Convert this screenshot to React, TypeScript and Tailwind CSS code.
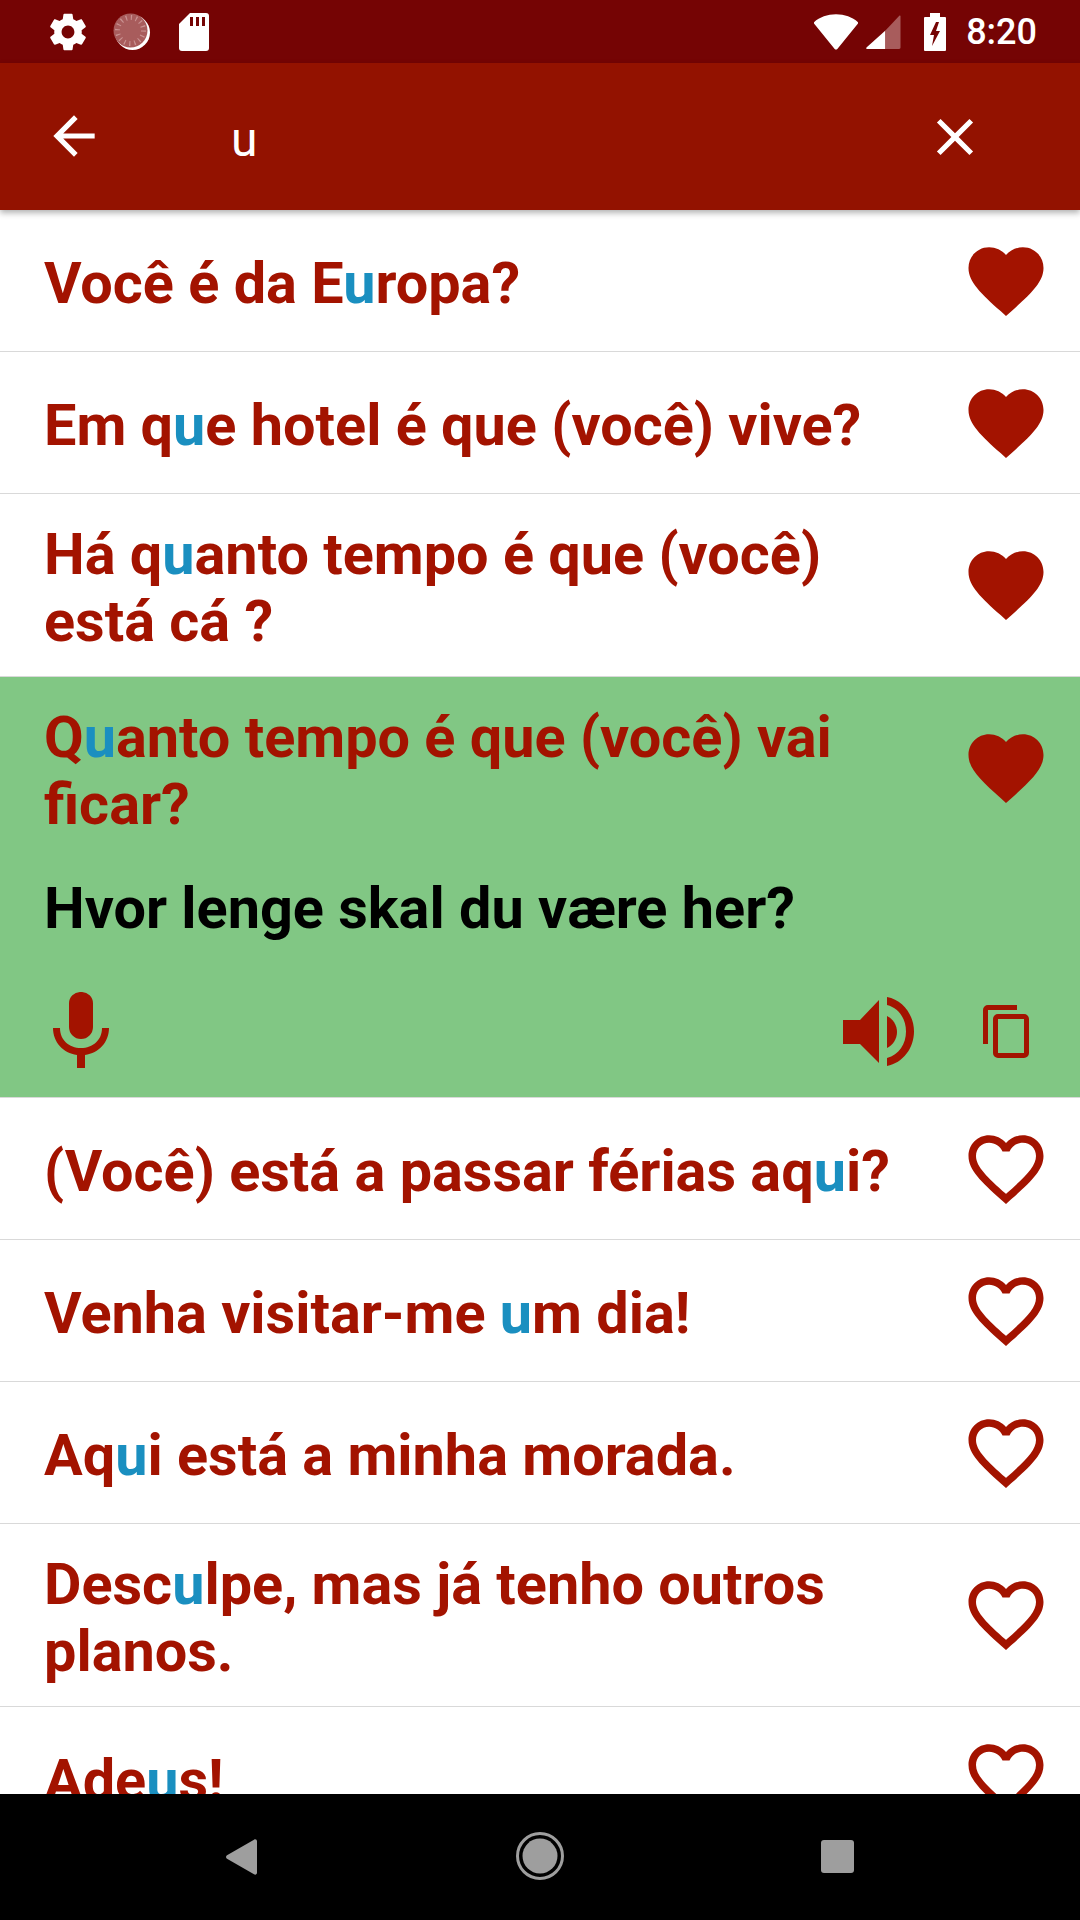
import React from "react";

const RED = "#a31300";

function Heart({ filled }: { filled: boolean }) {
  const d = "M12 21.35l-1.45-1.32C5.4 15.36 2 12.28 2 8.5 2 5.42 4.42 3 7.5 3c1.74 0 3.41.81 4.5 2.09C13.09 3.81 14.76 3 16.5 3 19.58 3 22 5.42 22 8.5c0 3.78-3.4 6.86-8.55 11.54L12 21.35z";
  const o = "M16.5 3c-1.74 0-3.41.81-4.5 2.09C10.91 3.81 9.24 3 7.5 3 4.42 3 2 5.42 2 8.5c0 3.78 3.4 6.86 8.55 11.54L12 21.35l1.45-1.32C18.6 15.36 22 12.28 22 8.5 22 5.42 19.58 3 16.5 3zm-4.4 15.55l-.1.1-.1-.1C7.14 14.24 4 11.39 4 8.5 4 6.5 5.5 5 7.5 5c1.54 0 3.04.99 3.57 2.36h1.87C13.46 5.99 14.96 5 16.5 5c2 0 3.5 1.5 3.5 3.5 0 2.89-3.14 5.74-7.9 10.05z";
  return (
    <svg viewBox="0 0 24 24" className="w-[90px] h-[90px] shrink-0" fill={RED}>
      <path d={filled ? d : o} />
    </svg>
  );
}

function Text({ parts }: { parts: string[] }) {
  return (
    <div className="flex-1 pt-[6px] pr-[30px] text-[57.6px] leading-[67px] font-bold text-[#a31300]">
      {parts.map((p, i) =>
        i % 2 === 1 ? (
          <span key={i} className="text-[#1a8fc0]">{p}</span>
        ) : (
          <span key={i}>{p}</span>
        )
      )}
    </div>
  );
}

function Row({ parts, filled }: { parts: string[]; filled: boolean }) {
  return (
    <div className="flex items-center min-h-[142px] pl-[44px] pr-[29px] py-[21px] border-b border-[#d9d9d9] bg-white">
      <Text parts={parts} />
      <Heart filled={filled} />
    </div>
  );
}

export default function App() {
  return (
    <div className="relative w-[1080px] h-[1920px] overflow-hidden bg-white flex flex-col font-['Roboto',sans-serif]">
      <div className="h-[63px] shrink-0 bg-[#750404] flex items-center pl-[46px] pr-[43px] text-white">
        <svg viewBox="0 0 24 24" className="w-[44px] h-[44px]" fill="#fff">
          <path d="M19.43 12.98c.04-.32.07-.64.07-.98s-.03-.66-.07-.98l2.11-1.65c.19-.15.24-.42.12-.64l-2-3.46c-.12-.22-.39-.3-.61-.22l-2.49 1c-.52-.4-1.08-.73-1.69-.98l-.38-2.65C14.46 2.18 14.25 2 14 2h-4c-.25 0-.46.18-.49.42l-.38 2.65c-.61.25-1.17.59-1.69.98l-2.49-1c-.23-.09-.49 0-.61.22l-2 3.46c-.13.22-.07.49.12.64l2.11 1.65c-.04.32-.07.65-.07.98s.03.66.07.98l-2.11 1.65c-.19.15-.24.42-.12.64l2 3.46c.12.22.39.3.61.22l2.49-1c.52.4 1.08.73 1.69.98l.38 2.65c.03.24.24.42.49.42h4c.25 0 .46-.18.49-.42l.38-2.65c.61-.25 1.17-.59 1.69-.98l2.49 1c.23.09.49 0 .61-.22l2-3.46c.12-.22.07-.49-.12-.64l-2.11-1.65zM12 15.5c-1.93 0-3.5-1.57-3.5-3.5s1.57-3.5 3.5-3.5 3.5 1.57 3.5 3.5-1.57 3.5-3.5 3.5z" />
        </svg>
        <svg viewBox="0 0 38 38" className="w-[38px] h-[38px] ml-[23px]">
          <circle cx="19.5" cy="19.5" r="17.5" fill="#fff" />
          <circle cx="17.5" cy="17.5" r="17" fill="#a85c5c" />
          <circle cx="17.5" cy="17.5" r="13" fill="none" stroke="#c99292" strokeWidth="5" strokeDasharray="1.2 3.9" />
        </svg>
        <svg viewBox="0 0 30 38" className="w-[30px] h-[38px] ml-[28px]" fill="#fff">
          <path d="M11 0h16a3 3 0 0 1 3 3v32a3 3 0 0 1-3 3H3a3 3 0 0 1-3-3V11z" />
          <path d="M11 4h3v9h-3zM17 4h3v9h-3zM23 4h3v9h-3z" fill="#750404" />
        </svg>
        <div className="flex-1" />
        <svg viewBox="0 0 46 37" className="w-[44px] h-[36px]" fill="#fff">
          <path d="M23 0C14 0 6 3 0 8.2c-.3.4-.3 1 0 1.3l21.6 26.7c.7.9 2 .9 2.8 0L46 9.500c.3-.3.3-.9 0-1.300C40 3 32 0 23 0z" />
        </svg>
        <svg viewBox="0 0 36 36" className="w-[35px] h-[35px] ml-[8px] mt-[2px]" fill="#fff">
          <path d="M20 16 L20 35 L1 35 C0 35 0 34 .5 33.500z" />
          <path d="M20 16 L34 1 C35 0 35.500 .5 35.500 1.500 V33 C35.500 34.500 35 35 34 35 H20z" fill="#a85c5c" />
        </svg>
        <svg viewBox="0 0 22 38" className="w-[22px] h-[38px] ml-[23px]" fill="#fff">
          <path fillRule="evenodd" d="M6 0h10v4h5a1 1 0 0 1 1 1v32a1 1 0 0 1-1 1H1a1 1 0 0 1-1-1V5a1 1 0 0 1 1-1h5zM12 9l-6 13h4l-2 11 8-15h-4l3-9z" />
        </svg>
        <span className="ml-[20px] text-[36px] font-medium leading-none">8:20</span>
      </div>

      <div className="relative z-10 h-[147px] shrink-0 bg-[#931200] flex items-center shadow-[0_3px_6px_rgba(0,0,0,0.3)] text-white">
        <svg viewBox="0 0 24 24" className="w-[62px] h-[62px] ml-[43px] mt-[-1px]" fill="#fff">
          <path d="M20 11H7.830l5.590-5.590L12 4l-8 8 8 8 1.410-1.410L7.830 13H20v-2z" />
        </svg>
        <span className="ml-[126px] pt-[6px] text-[48px] leading-none">u</span>
        <div className="flex-1" />
        <svg viewBox="0 0 24 24" className="w-[62px] h-[62px] mr-[94px]" fill="#fff">
          <path d="M19 6.410L17.590 5 12 10.590 6.410 5 5 6.410 10.590 12 5 17.590 6.410 19 12 13.410 17.590 19 19 17.590 13.410 12z" />
        </svg>
      </div>

      <Row parts={["Você é da E", "u", "ropa?"]} filled />
      <Row parts={["Em q", "u", "e hotel é que (você) vive?"]} filled />
      <Row parts={["Há q", "u", "anto tempo é que (você) está cá ?"]} filled />

      <div className="bg-[#81c784] border-b border-[#d9d9d9] h-[421px] shrink-0 flex flex-col pl-[44px] pr-[29px] pt-[21px]">
        <div className="flex items-center">
          <Text parts={["Q", "u", "anto tempo é que (você) vai ficar?"]} />
          <Heart filled />
        </div>
        <div className="mt-[37px] text-[57.6px] leading-[67px] font-bold text-black">Hvor lenge skal du være her?</div>
        <div className="flex items-center mt-[50px]">
          <svg viewBox="0 0 56 76" className="w-[56px] h-[76px] ml-[9px]" fill={RED}>
            <path d="M28 0a11.500 11.500 0 0 1 12 12v23a12 12 0 0 1-24 0V12A11.500 11.500 0 0 1 28 0z" />
            <path d="M0 36h7c0 12 9 20 21 20s21-8 21-20h7c0 14-10 25-24 27v13h-8V63C10 61 0 50 0 36z" />
          </svg>
          <div className="flex-1" />
          <svg viewBox="0 0 71 69" className="w-[71px] h-[69px] mt-[2px]" fill={RED}>
            <path d="M0 23h17L36 3v63L17 47H0z" />
            <path d="M44 19c6 3 10 9 10 16s-4 13-10 16z" />
            <path d="M44 0c16 3 27 18 27 34.500S60 66 44 69v-8c12-3 19-14 19-26.500S56 11 44 8z" />
          </svg>
          <svg viewBox="0 0 46 53" className="w-[46px] h-[53px] ml-[69px] mr-[22px] mt-[2px]" fill={RED}>
            <path d="M0 5a5 5 0 0 1 5-5h29v5H5v34H0z" />
            <path fillRule="evenodd" d="M15 9h26a5 5 0 0 1 5 5v34a5 5 0 0 1-5 5H15a5 5 0 0 1-5-5V14a5 5 0 0 1 5-5zm0 5v34h26V14z" />
          </svg>
        </div>
      </div>

      <Row parts={["(Você) está a passar férias aq", "u", "i?"]} filled={false} />
      <Row parts={["Venha visitar-me ", "u", "m dia!"]} filled={false} />
      <Row parts={["Aq", "u", "i está a minha morada."]} filled={false} />
      <Row parts={["Desc", "u", "lpe, mas já tenho outros planos."]} filled={false} />
      <Row parts={["Ade", "u", "s!"]} filled={false} />

      <div className="absolute left-0 right-0 bottom-0 h-[126px] bg-black">
        <svg viewBox="0 0 31 36" className="absolute left-[226px] top-[45px] w-[31px] h-[36px]" fill="#9e9e9e">
          <path d="M28 .7c1.500-1 3 0 3 1.800v31c0 1.800-1.500 2.800-3 1.800L1 19.800c-1.300-1-1.300-2.600 0-3.600z" />
        </svg>
        <svg viewBox="0 0 48 48" className="absolute left-[516px] top-[38px] w-[48px] h-[48px]">
          <circle cx="24" cy="24" r="22.500" fill="none" stroke="#9e9e9e" strokeWidth="3" />
          <circle cx="24" cy="24" r="17.500" fill="#9e9e9e" />
        </svg>
        <div className="absolute left-[821px] top-[46px] w-[33px] h-[33px] rounded-[3px] bg-[#9e9e9e]" />
      </div>
    </div>
  );
}
